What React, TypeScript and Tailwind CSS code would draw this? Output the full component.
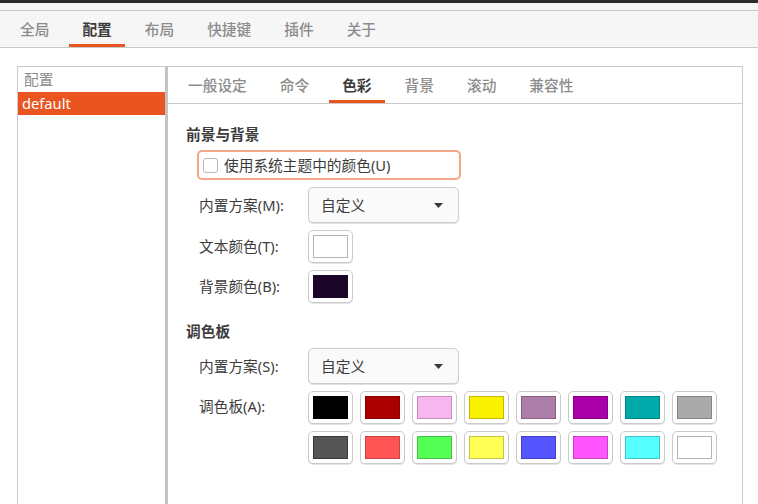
import React from "react";

const font = { fontFamily: '"Noto Sans", "Noto Sans CJK SC", sans-serif' };

const topTabs = ["全局", "配置", "布局", "快捷键", "插件", "关于"];
const innerTabs = ["一般设定", "命令", "色彩", "背景", "滚动", "兼容性"];

// [fill, border]
const palette: [string, string][] = [
    ["bg-[#000000]", "border-[#000000]"],
    ["bg-[#aa0000]", "border-[#880000]"],
    ["bg-[#f8b6ee]", "border-[#c78dbf]"],
    ["bg-[#f9f100]", "border-[#c2bb00]"],
    ["bg-[#ad7fa8]", "border-[#875f82]"],
    ["bg-[#aa00aa]", "border-[#830083]"],
    ["bg-[#00aaaa]", "border-[#008383]"],
    ["bg-[#aaaaaa]", "border-[#858585]"],
    ["bg-[#555555]", "border-[#3a3a3a]"],
    ["bg-[#ff5555]", "border-[#c94444]"],
    ["bg-[#55ff55]", "border-[#44c044]"],
    ["bg-[#ffff55]", "border-[#c4c444]"],
    ["bg-[#5555ff]", "border-[#4040c0]"],
    ["bg-[#ff55ff]", "border-[#c444c4]"],
    ["bg-[#55ffff]", "border-[#44c4c4]"],
    ["bg-[#ffffff]", "border-[#b4b4b4]"],
];

function ColorButton({ fill, border }: { fill: string; border: string }) {
    return (
        <div className="w-[45px] h-[33px] rounded-[5px] border border-[#cbcbcb] bg-white p-[4px] shadow-[0_1px_0_#e4e4e4]">
            <div className={`w-full h-full border ${fill} ${border}`} />
        </div>
    );
}

function Combo() {
    return (
        <div className="w-[151px] h-[36px] rounded-[5px] border border-[#cdcdcd] bg-[#fafafa] shadow-[0_1px_0_#e2e2e2] flex items-center justify-between pl-[12px] pr-[15px]">
            <span>自定义</span>
            <svg width="9" height="5" viewBox="0 0 9 5">
                <path d="M0 0 H9 L4.5 5 Z" fill="#3a3a3a" />
            </svg>
        </div>
    );
}

function Row({ label, children, className = "" }: { label: string; children: React.ReactNode; className?: string }) {
    return (
        <div className={`flex items-center ml-[31px] ${className}`}>
            <div className="w-[109px]">{label}</div>
            {children}
        </div>
    );
}

export default function App() {
    return (
        <div className="w-[758px] h-[504px] bg-white overflow-hidden text-[14.7px] text-[#3c3c3c]" style={font}>
            <div className="h-[3px] bg-[#2c2c2c]" />
            <div className="h-[8px] bg-[#f7f7f7] border-b border-[#cacaca]" />
            {/* main tabs */}
            <div className="h-[37px] bg-[#f6f6f6] border-b border-[#cacaca] flex gap-[7px] pl-[7px]">
                {topTabs.map((t) => (
                    <div
                        key={t}
                        className={`px-[13px] h-full flex items-center border-b-[3px] ${t === "配置" ? "border-[#e95420] text-[#3c3c3c] font-bold" : "border-transparent text-[#8c8c8c] font-medium"}`}
                    >
                        <span className="pt-[3px]">{t}</span>
                    </div>
                ))}
            </div>

            <div className="flex mt-[18px] ml-[17px] h-[438px]">
                {/* profile list */}
                <div className="w-[148px] border-l border-t border-[#cacaca]">
                    <div className="h-[25px] flex items-center pl-[6px] text-[#8c8c8c]">配置</div>
                    <div className="h-[23px] bg-[#e95420] text-white flex items-center pl-[4px]">default</div>
                </div>
                <div className="w-[3px] bg-[#c4c4c4]" />

                {/* notebook */}
                <div className="w-[575px] border-t border-r border-[#cacaca] flex flex-col">
                    <div className="h-[37px] border-b border-[#cacaca] flex gap-[7px] pl-[7px]">
                        {innerTabs.map((t) => (
                            <div
                                key={t}
                                className={`px-[13px] h-full flex items-center border-b-[3px] ${t === "色彩" ? "border-[#e95420] text-[#3c3c3c] font-bold" : "border-transparent text-[#8c8c8c] font-medium"}`}
                            >
                                <span className="pt-[3px]">{t}</span>
                            </div>
                        ))}
                    </div>

                    <div className="flex flex-col">
                        <div className="mt-[20px] ml-[18px] h-[20px] leading-[20px] font-bold">前景与背景</div>

                        <div className="mt-[6px] ml-[29px] w-[264px] h-[30px] rounded-[5px] border-2 border-[#f4a688] flex items-center pl-[4px]">
                            <div className="w-[15px] h-[15px] rounded-[3px] border border-[#b8b8b8] bg-white" />
                            <span className="ml-[6px]">使用系统主题中的颜色(U)</span>
                        </div>

                        <Row label="内置方案(M):" className="mt-[7px]">
                            <Combo />
                        </Row>
                        <Row label="文本颜色(T):" className="mt-[7px]">
                            <ColorButton fill="bg-white" border="border-[#b4b4b4]" />
                        </Row>
                        <Row label="背景颜色(B):" className="mt-[7px]">
                            <ColorButton fill="bg-[#1c0627]" border="border-[#1c0627]" />
                        </Row>

                        <div className="mt-[18px] ml-[18px] h-[20px] leading-[20px] font-bold">调色板</div>

                        <Row label="内置方案(S):" className="mt-[7px]">
                            <Combo />
                        </Row>
                        <div className="flex ml-[31px] mt-[7px]">
                            <div className="w-[109px] pt-[4px]">调色板(A):</div>
                            <div className="grid grid-cols-8 gap-[7px]">
                                {palette.map(([f, b], i) => (
                                    <ColorButton key={i} fill={f} border={b} />
                                ))}
                            </div>
                        </div>
                    </div>
                </div>
            </div>
        </div>
    );
}
